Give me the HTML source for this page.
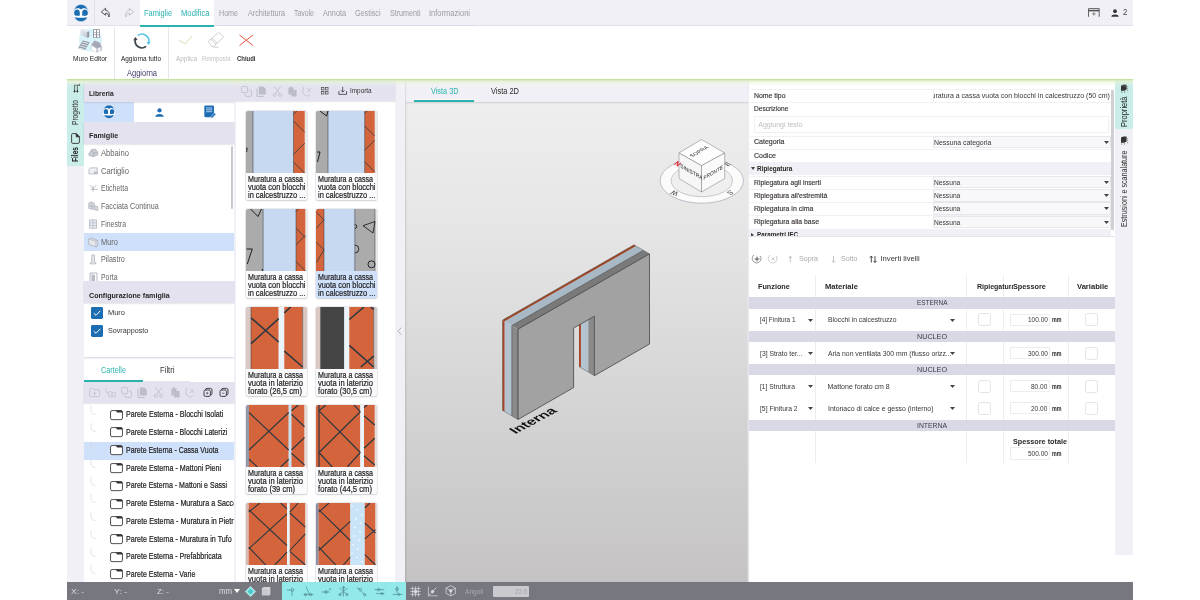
<!DOCTYPE html>
<html lang="it"><head><meta charset="utf-8"><title>Muro Editor</title>
<style>
html,body{margin:0;padding:0;background:#fff;}
body{width:1200px;height:600px;position:relative;overflow:hidden;font-family:"Liberation Sans",sans-serif;}
.r{position:absolute;box-sizing:border-box;}
.b{-webkit-text-stroke-width:0.2px;}
.t{position:absolute;z-index:3;white-space:nowrap;line-height:1;transform-origin:0 50%;}
svg{position:absolute;overflow:visible;z-index:3;}
#app{position:absolute;left:0;top:0;width:1200px;height:600px;will-change:transform;}
</style></head><body><div id="app">
<div class="r" style="left:67.0px;top:0.0px;width:1066.0px;height:26.0px;background:#f1f0f6;border-bottom:1px solid #e2e1ea;"></div>
<div class="r" style="left:140.0px;top:0.0px;width:74.0px;height:26.5px;background:#fff;"></div>
<div class="r" style="left:140.0px;top:24.5px;width:74.0px;height:2.0px;background:#2ab3ae;"></div>
<div class="r" style="left:94.0px;top:0.0px;width:0.6px;height:25.0px;background:#e2e1ea;"></div>
<div class="r" style="left:214.0px;top:25.0px;width:261.0px;height:1.0px;background:#dad9e8;"></div>
<svg style="left:71.8px;top:3.2px" width="18" height="20" viewBox="-9 -10 18 20">
<ellipse rx="7.6" ry="8.7" fill="#1d6db3" stroke="#fff" stroke-width="0.5"/>
<path d="M-7.7 -0.6 C-7.7 -5.4 -1 -5.8 0 -3.3 C1 -5.8 7.7 -5.4 7.7 -0.6 L7.7 3.8 C5 5.1 -5 5.1 -7.7 3.8 Z" fill="#fff"/>
<path d="M-6.9 0 C-6.9 -4.6 -1.2 -4.6 -1.2 -0.6 V2.2 Q-1.2 2.8 -1.8 2.8 H-5.2 Q-6.9 2.8 -6.9 0Z M6.9 0 C6.9 -4.6 1.2 -4.6 1.2 -0.6 V2.2 Q1.2 2.8 1.8 2.8 H5.2 Q6.9 2.8 6.9 0Z" fill="#1d6db3"/>
</svg>
<svg style="left:100px;top:7px" width="12" height="12" viewBox="0 0 12 12" fill="none" stroke="#444" stroke-width="0.9" stroke-linejoin="round"><path d="M5.6 1.2 L1.3 5 L5.6 8.2 V6.2 C7.6 6.2 8.6 7.6 8.9 10 C10.2 6.6 8.6 3.6 5.6 3.4 Z"/></svg>
<svg style="left:122.5px;top:7px" width="12" height="12" viewBox="0 0 12 12" fill="none" stroke="#bdbdc4" stroke-width="0.9" stroke-linejoin="round"><path d="M6.4 1.2 L10.7 5 L6.4 8.2 V6.2 C4.4 6.2 3.4 7.6 3.1 10 C1.8 6.6 3.4 3.6 6.4 3.4 Z"/></svg>
<span class="t" style="left:144.0px;top:8.7px;font-size:8.3px;color:#2ab3ae;transform:scaleX(0.893);">Famiglie</span>
<span class="t" style="left:181.0px;top:8.7px;font-size:8.3px;color:#2ab3ae;transform:scaleX(0.922);">Modifica</span>
<span class="t" style="left:219.0px;top:8.7px;font-size:8.3px;color:#9a9aa2;transform:scaleX(0.858);">Home</span>
<span class="t" style="left:247.5px;top:8.7px;font-size:8.3px;color:#9a9aa2;transform:scaleX(0.872);">Architettura</span>
<span class="t" style="left:293.7px;top:8.7px;font-size:8.3px;color:#9a9aa2;transform:scaleX(0.825);">Tavole</span>
<span class="t" style="left:322.5px;top:8.7px;font-size:8.3px;color:#9a9aa2;transform:scaleX(0.874);">Annota</span>
<span class="t" style="left:354.5px;top:8.7px;font-size:8.3px;color:#9a9aa2;transform:scaleX(0.864);">Gestisci</span>
<span class="t" style="left:389.5px;top:8.7px;font-size:8.3px;color:#9a9aa2;transform:scaleX(0.859);">Strumenti</span>
<span class="t" style="left:429.0px;top:8.7px;font-size:8.3px;color:#9a9aa2;transform:scaleX(0.907);">Informazioni</span>
<svg style="left:1088px;top:8px" width="12" height="9" viewBox="0 0 12 9" fill="none" stroke="#555" stroke-width="0.9"><path d="M0.5 8.8 V0.6 H11.2 V8.8"/><path d="M0.5 2.6 H11.2" stroke-width="1.6"/><path d="M5.9 4.2 V7.6 M4.3 5.9 H7.5" stroke-width="0.7"/></svg>
<svg style="left:1110.5px;top:8.5px" width="8" height="8" viewBox="0 0 8 8" fill="#333"><circle cx="4" cy="2.2" r="1.9"/><path d="M0.3 7.8 C0.3 4.6 7.7 4.6 7.7 7.8 Z"/></svg>
<span class="t" style="left:1123.0px;top:8.4px;font-size:8.3px;color:#444;transform:scaleX(0.931);">2</span>
<div class="r" style="left:67.0px;top:26.5px;width:1066.0px;height:53.5px;background:#fff;"></div>
<div class="r" style="left:114.2px;top:27.0px;width:0.6px;height:52.0px;background:#e6e6ec;"></div>
<div class="r" style="left:168.2px;top:27.0px;width:0.6px;height:52.0px;background:#e6e6ec;"></div>
<svg style="left:74px;top:26px" width="36" height="28" viewBox="0 0 36 28">
<defs><linearGradient id="wg" x1="0" y1="0" x2="1" y2="1"><stop offset="0" stop-color="#eef0f5"/><stop offset="1" stop-color="#bfc3cf"/></linearGradient></defs>
<circle cx="16.6" cy="14" r="11.6" fill="#d9f3fb"/>
<path d="M6.2 3 L13.2 6 V12 L6.2 8.6Z" fill="url(#wg)"/><path d="M6.2 3 L8.4 2.3 L15.2 5.3 L13.2 6Z" fill="#e9ebf1"/><path d="M13.2 6 L15.2 5.3 V11 L13.2 12Z" fill="#8f93a0"/>
<rect x="19" y="3.2" width="6.9" height="8.7" fill="#8d909c"/><path d="M19.9 4 h2.1 v2 h-2.1z M23 4 h2.1 v2 h-2.1z M19.9 6.6 h2.1 v2 h-2.1z M23 6.6 h2.1 v2 h-2.1z M19.9 9.2 h2.1 v2 h-2.1z M23 9.2 h2.1 v2 h-2.1z" fill="#fff"/>
<path d="M8.8 14.4 L15.6 16.2 L10.8 24.2 L4 22.2Z" fill="#9195a3"/><path d="M8.6 16 L14.2 17.5 M7.4 18 L13 19.5 M6.2 20 L11.8 21.5 M5 22 L10.6 23.5" stroke="#dfeaf2" stroke-width="1.1"/>
<path d="M17.2 19 L20.4 14.4 L25.6 16.6 L28 20.8 L22.4 22.8Z" fill="#a6aab8"/><path d="M17.6 19.4 L22.4 22.6 V26.8 L17.6 23.8Z" fill="#fff" stroke="#b9bcc8" stroke-width="0.3"/><path d="M22.4 22.6 L28 20.6 V24.6 L22.4 26.8Z" fill="#c3c6d1"/><path d="M24 22.4 L26.4 21.5 V24.6 L24 25.6Z" fill="#f4f5f8"/>
</svg>
<span class="t" style="left:73.0px;top:54.5px;font-size:7.6px;color:#222;transform:scaleX(0.866);">Muro Editor</span>
<svg style="left:132.5px;top:32px" width="18" height="18" viewBox="-9 -9 18 18" fill="none" stroke-width="1.7">
<path d="M-4.2 -5.4 A6.8 6.8 0 0 1 6.6 1.6" stroke="#5cc6ea"/><path d="M4.3 1.2 L6.8 4 L8.8 0.6 Z" fill="#5cc6ea" stroke="none"/>
<path d="M4.2 5.4 A6.8 6.8 0 0 1 -6.6 -1.6" stroke="#3c4650"/><path d="M-4.3 -1.2 L-6.8 -4 L-8.8 -0.6 Z" fill="#3c4650" stroke="none"/>
</svg>
<span class="t" style="left:121.0px;top:54.5px;font-size:7.6px;color:#222;transform:scaleX(0.845);">Aggiorna tutto</span>
<span class="t" style="left:127.0px;top:69.1px;font-size:8.3px;color:#3c3c6e;transform:scaleX(0.903);">Aggiorna</span>
<svg style="left:176px;top:32px" width="20" height="16" viewBox="0 0 20 16" fill="none"><path d="M3 8 L9 12 L16 4" stroke="#c9dfa2" stroke-width="0.9"/></svg>
<svg style="left:206px;top:30px" width="20" height="20" viewBox="0 0 20 20" fill="none" stroke="#b9b9be" stroke-width="0.7"><path d="M2.3 11.5 L12.6 2.2 L17.6 7 L7.6 16.6 H5.8 Z"/><path d="M4.8 9.3 L10 14.3 M6 8.2 L11.2 13.2"/><path d="M7.6 17.2 H12.4"/></svg>
<svg style="left:238px;top:33px" width="17" height="15" viewBox="0 0 17 15" fill="none" stroke="#e2573f" stroke-width="1"><path d="M1.5 2 L15 12.5 M15 2 L1.5 12.5"/></svg>
<span class="t" style="left:176.0px;top:54.5px;font-size:7.6px;color:#b9b9bd;transform:scaleX(0.842);">Applica</span>
<span class="t" style="left:202.0px;top:54.5px;font-size:7.6px;color:#c4c4c8;transform:scaleX(0.785);">Reimposta</span>
<span class="t" style="left:237.0px;top:54.5px;font-size:7.6px;color:#333;font-weight:700;transform:scaleX(0.783);">Chiudi</span>
<div class="r" style="left:67.0px;top:80.0px;width:17.0px;height:502.0px;background:#f1f0f6;"></div>
<div class="r" style="left:67.0px;top:83.0px;width:17.0px;height:83.0px;background:#c9ede8;"></div>
<svg style="left:72.5px;top:84.3px" width="7" height="9" viewBox="0 0 9 9" preserveAspectRatio="none" fill="none" stroke="#333" stroke-width="0.8"><path d="M1 1.2 H7.4 M2 1.2 V7.2 M5.6 1.2 V7.2"/><circle cx="2" cy="7.4" r="0.8" fill="#333"/><circle cx="5.6" cy="7.4" r="0.8" fill="#333"/><circle cx="8" cy="0.9" r="0.7" fill="#333"/></svg>
<span class="t" style="left:75.4px;top:125.0px;font-size:9px;color:#333;transform-origin:0 0;transform:rotate(-90deg) scaleX(0.735) translateY(-50%);">Progetto</span>
<svg style="left:71px;top:132.5px" width="9" height="11" viewBox="0 0 9 11" fill="none" stroke="#333" stroke-width="0.9" stroke-linejoin="round"><path d="M1.6 0.6 H5.2 L8.4 3.8 V9.2 Q8.4 10.4 7.2 10.4 H1.8 Q0.6 10.4 0.6 9.2 V1.6 Q0.6 0.6 1.6 0.6Z"/><path d="M5.2 0.6 V3.8 H8.4Z" fill="#333"/></svg>
<span class="t" style="left:75.4px;top:161.7px;font-size:9px;color:#222;transform-origin:0 0;transform:rotate(-90deg) scaleX(0.731) translateY(-50%);font-weight:700;">Files</span>
<div class="r" style="left:84.0px;top:80.0px;width:150.0px;height:502.0px;background:#fff;"></div>
<div class="r" style="left:234.0px;top:80.0px;width:1.5px;height:502.0px;background:#f1f0f6;"></div>
<div class="r" style="left:84.0px;top:80.0px;width:150.0px;height:21.5px;background:#e3e2ee;box-shadow:0 0.8px 1.6px rgba(40,40,60,.22);z-index:2;"></div>
<span class="t" style="left:89.0px;top:90.3px;font-size:7.6px;color:#2a2626;font-weight:700;transform:scaleX(0.886);">Libreria</span>
<div class="r" style="left:84.0px;top:101.5px;width:50.0px;height:20.5px;background:#cfe0fb;"></div>
<svg style="left:102.2px;top:104.1px" width="14" height="15.6" viewBox="-9 -10 18 20">
<ellipse rx="7.6" ry="8.7" fill="#1d6db3" stroke="#fff" stroke-width="0.5"/>
<path d="M-7.7 -0.6 C-7.7 -5.4 -1 -5.8 0 -3.3 C1 -5.8 7.7 -5.4 7.7 -0.6 L7.7 3.8 C5 5.1 -5 5.1 -7.7 3.8 Z" fill="#fff"/>
<path d="M-6.9 0 C-6.9 -4.6 -1.2 -4.6 -1.2 -0.6 V2.2 Q-1.2 2.8 -1.8 2.8 H-5.2 Q-6.9 2.8 -6.9 0Z M6.9 0 C6.9 -4.6 1.2 -4.6 1.2 -0.6 V2.2 Q1.2 2.8 1.8 2.8 H5.2 Q6.9 2.8 6.9 0Z" fill="#1d6db3"/>
</svg>
<svg style="left:154.5px;top:108px" width="9" height="9" viewBox="0 0 8 8" fill="#1d6db3"><circle cx="4" cy="2.2" r="1.9"/><path d="M0.3 7.8 C0.3 4.6 7.7 4.6 7.7 7.8 Z"/></svg>
<svg style="left:204.2px;top:105.3px" width="12.4" height="15" viewBox="0 0 12 14"><path d="M0.3 1.4 Q0.3 0.3 1.4 0.3 H8.6 Q9.7 0.3 9.7 1.4 V8 L6.2 11.6 H1.4 Q0.3 11.6 0.3 10.5Z" fill="#1d6db3"/><path d="M2 2.6 H8 M2 4.4 H8 M2 6.2 H8" stroke="#cfe0fb" stroke-width="0.8"/><path d="M6.4 12.6 L7 10.6 L10.4 7.4 L11.6 8.6 L8.3 12Z" fill="#1d6db3" stroke="#fff" stroke-width="0.4"/></svg>
<div class="r" style="left:84.0px;top:122.0px;width:150.0px;height:22.0px;background:#e3e2ee;box-shadow:0 0.8px 1.6px rgba(40,40,60,.22);z-index:2;"></div>
<span class="t" style="left:88.8px;top:131.8px;font-size:7.6px;color:#2a2626;font-weight:700;transform:scaleX(0.947);">Famiglie</span>
<div class="r" style="left:84.0px;top:233.0px;width:150.0px;height:18.0px;background:#cfe0fb;"></div>
<div class="r" style="left:84px;top:144px;width:150px;height:136.5px;overflow:hidden"></div>
<svg style="left:88px;top:147.8px" width="10.2" height="10.2" viewBox="0 0 11 11"><path d="M1 6 L3.5 2 L8 1 L10.5 4.5 V7.5 L6 9.5 L1 8Z" fill="#c9ccd3" stroke="#a2a6b3" stroke-width="0.6"/><path d="M3.5 2 L6 5.5 L10.5 4.5 M6 5.5 V9.5" fill="none" stroke="#a2a6b3" stroke-width="0.6"/></svg>
<span class="t" style="left:101.2px;top:148.8px;font-size:8.3px;color:#666;transform:scaleX(0.919);">Abbaino</span>
<svg style="left:88px;top:165.6px" width="10.2" height="10.2" viewBox="0 0 11 11"><path d="M1 3.5 L3 2 H10 V8.6 H1Z" fill="#eef0f4" stroke="#a2a6b3" stroke-width="0.7"/><path d="M6.5 6 H10 V8.6 H6.5Z" fill="#b8bcc6"/></svg>
<span class="t" style="left:101.2px;top:166.6px;font-size:8.3px;color:#666;transform:scaleX(0.920);">Cartiglio</span>
<svg style="left:88px;top:183.3px" width="10.2" height="10.2" viewBox="0 0 11 11"><path d="M2 2 L5.5 6.5 L9 2 M5.5 3 V9.5 M3 7 H10.5" fill="none" stroke="#a2a6b3" stroke-width="0.7"/></svg>
<span class="t" style="left:101.2px;top:184.3px;font-size:8.3px;color:#666;transform:scaleX(0.836);">Etichetta</span>
<svg style="left:88px;top:201.1px" width="10.2" height="10.2" viewBox="0 0 11 11"><path d="M0.8 2 L4 1 L7 2.6 V5 L10.6 6 V10.4 L7 9.4 L0.8 8Z" fill="#d5d8df" stroke="#a2a6b3" stroke-width="0.6"/><path d="M4 1 V8.7 M7 5 V9.4 M0.8 5 L7 6.4" fill="none" stroke="#a2a6b3" stroke-width="0.5"/></svg>
<span class="t" style="left:101.2px;top:202.1px;font-size:8.3px;color:#666;transform:scaleX(0.863);">Facciata Continua</span>
<svg style="left:88px;top:218.8px" width="10.2" height="10.2" viewBox="0 0 11 11"><rect x="1.8" y="1" width="7.4" height="9" fill="#e3ecf2" stroke="#aeb2be" stroke-width="0.8"/><path d="M5.5 1 V10 M1.8 4 H9.2 M1.8 7 H9.2" stroke="#aeb2be" stroke-width="0.6"/></svg>
<span class="t" style="left:101.2px;top:219.8px;font-size:8.3px;color:#666;transform:scaleX(0.834);">Finestra</span>
<svg style="left:88px;top:236.6px" width="10.2" height="10.2" viewBox="0 0 11 11"><path d="M0.8 2.2 L2.6 1 L10.4 3.6 V10 L8.6 10.6 L0.8 8Z" fill="#e4e6ea" stroke="#a2a6b3" stroke-width="0.7"/><path d="M8.6 4.4 V10.6 M0.8 2.2 L8.6 4.4 L10.4 3.6" fill="none" stroke="#a2a6b3" stroke-width="0.6"/></svg>
<span class="t" style="left:101.2px;top:237.6px;font-size:8.3px;color:#666;transform:scaleX(0.899);">Muro</span>
<svg style="left:88px;top:254.3px" width="10.2" height="10.2" viewBox="0 0 11 11"><path d="M4 1 H7 V8.6 L8.6 9.4 V10.6 H2.4 V9.4 L4 8.6Z" fill="#e4e6ea" stroke="#a2a6b3" stroke-width="0.7"/></svg>
<span class="t" style="left:101.2px;top:255.3px;font-size:8.3px;color:#666;transform:scaleX(0.858);">Pilastro</span>
<div class="r" style="left:84px;top:270px;width:150px;height:10.5px;overflow:hidden">
<svg style="left:3.5px;top:1.8px" width="11" height="11" viewBox="0 0 11 11"><path d="M2 10.6 V1 H9 V10.6" fill="none" stroke="#a2a6b3" stroke-width="0.8"/><path d="M3.4 2.2 L7 3 V10.6 H3.4Z" fill="#b8bcc6"/></svg>
<span class="t" style="left:17.25px;top:3.1px;font-size:8.3px;color:#666;transform:scaleX(0.832)">Porta</span></div>
<div class="r" style="left:231.3px;top:146.0px;width:1.7px;height:63.0px;background:#c9c9cf;border-radius:1px;"></div>
<div class="r" style="left:84.0px;top:280.5px;width:150.0px;height:22.5px;background:#e3e2ee;box-shadow:0 0.8px 1.6px rgba(40,40,60,.22);z-index:2;"></div>
<span class="t" style="left:88.8px;top:291.8px;font-size:7.6px;color:#2a2626;font-weight:700;transform:scaleX(0.937);">Configurazione famiglia</span>
<svg style="left:90.5px;top:306.5px" width="12" height="12" viewBox="0 0 12 12"><rect width="12" height="12" rx="1.4" fill="#1d6db3"/><path d="M2.8 6.2 L5 8.3 L9.3 3.8" fill="none" stroke="#fff" stroke-width="1"/></svg>
<span class="t" style="left:108.0px;top:308.5px;font-size:8px;color:#333;transform:scaleX(0.933);">Muro</span>
<svg style="left:90.5px;top:324.5px" width="12" height="12" viewBox="0 0 12 12"><rect width="12" height="12" rx="1.4" fill="#1d6db3"/><path d="M2.8 6.2 L5 8.3 L9.3 3.8" fill="none" stroke="#fff" stroke-width="1"/></svg>
<span class="t" style="left:108.0px;top:326.5px;font-size:8px;color:#333;transform:scaleX(0.896);">Sovrapposto</span>
<div class="r" style="left:84.0px;top:356.5px;width:150.0px;height:2.5px;background:#f1f0f6;border-top:1px solid #e2e1ea;"></div>
<span class="t" style="left:101.2px;top:366.1px;font-size:8.3px;color:#2ab3ae;transform:scaleX(0.874);">Cartelle</span>
<span class="t" style="left:159.5px;top:366.1px;font-size:8.3px;color:#333;transform:scaleX(0.925);">Filtri</span>
<div class="r" style="left:84.0px;top:380.0px;width:58.7px;height:1.8px;background:#2ab3ae;"></div>
<div class="r" style="left:142.7px;top:381.0px;width:47.3px;height:0.8px;background:#e6e6ee;"></div>
<div class="r" style="left:84.0px;top:382.3px;width:150.0px;height:21.0px;background:#e3e2ee;box-shadow:0 0.8px 1.6px rgba(40,40,60,.22);z-index:2;"></div>
<svg style="left:88.5px;top:387px" width="11" height="11" viewBox="0 0 11 11"><path d="M0.6 2.6 Q0.6 1.6 1.6 1.6 H4 L5 2.8 H9.6 Q10.6 2.8 10.6 3.8 V8.6 Q10.6 9.6 9.6 9.6 H1.6 Q0.6 9.6 0.6 8.6Z M5.6 4.8 V8 M4 6.4 H7.2" fill="none" stroke="#bdbdc9" stroke-width="0.7"/></svg>
<svg style="left:105.2px;top:387px" width="11" height="11" viewBox="0 0 11 11"><path d="M1 1 V4 Q1 6.5 3.5 6.5 M3.8 5.4 Q3.8 4.6 4.6 4.6 H6 L6.6 5.4 H9.6 Q10.4 5.4 10.4 6.2 V9 Q10.4 9.8 9.6 9.8 H4.6 Q3.8 9.8 3.8 9Z M7.1 6.4 V8.8 M5.9 7.6 H8.3" fill="none" stroke="#bdbdc9" stroke-width="0.7"/></svg>
<svg style="left:121.2px;top:387px" width="11" height="11" viewBox="0 0 11 11"><rect x="0.6" y="0.6" width="6" height="6" rx="0.8" fill="none" stroke="#bdbdc9" stroke-width="0.8"/><path d="M8 4.2 H9.6 Q10.4 4.2 10.4 5 V9.6 Q10.4 10.4 9.6 10.4 H5 Q4.2 10.4 4.2 9.6 V8" fill="none" stroke="#bdbdc9" stroke-width="0.8"/></svg>
<svg style="left:137.0px;top:387px" width="11" height="11" viewBox="0 0 11 11"><path d="M2.8 0.6 H7.4 L9.8 3 V8.6 H2.8Z" fill="#bdbdc9"/><path d="M1 2.4 V10.4 H7.8" fill="none" stroke="#bdbdc9" stroke-width="1"/></svg>
<svg style="left:153.2px;top:387px" width="11" height="11" viewBox="0 0 11 11"><path d="M2.4 0.6 L7.4 7.4 M8.6 0.6 L3.6 7.4" stroke="#bdbdc9" stroke-width="0.8"/><circle cx="2.8" cy="8.8" r="1.5" fill="none" stroke="#bdbdc9" stroke-width="0.8"/><circle cx="8.2" cy="8.8" r="1.5" fill="none" stroke="#bdbdc9" stroke-width="0.8"/></svg>
<svg style="left:169.5px;top:387px" width="11" height="11" viewBox="0 0 11 11"><path d="M1.4 1.6 H6.6 V4 H9.6 V10.4 H4.2 V8.6 H1.4Z M3 0.6 H5 V2 H3Z" fill="#bdbdc9"/></svg>
<svg style="left:184.5px;top:387px" width="11" height="11" viewBox="0 0 11 11"><path d="M1.4 0.8 V3 A4.6 4.6 0 0 0 8.4 8.8" fill="none" stroke="#bdbdc9" stroke-width="0.7"/><path d="M5.2 2 L9 5.8 M9 2 L5.2 5.8" stroke="#bdbdc9" stroke-width="0.7"/></svg>
<svg style="left:201.5px;top:387px" width="11" height="11" viewBox="0 0 11 11"><rect x="2" y="3" width="6.4" height="6.4" rx="1.4" fill="none" stroke="#333" stroke-width="0.9"/><path d="M3.4 3 Q3.4 1.4 5 1.4 H8.4 Q10 1.4 10 3 V6.4 Q10 8 8.4 8" fill="none" stroke="#333" stroke-width="0.9"/><path d="M5.2 5 V7.4 M4 6.2 H6.4" stroke="#333" stroke-width="0.6"/></svg>
<svg style="left:217.5px;top:387px" width="11" height="11" viewBox="0 0 11 11"><rect x="2" y="3" width="6.4" height="6.4" rx="1.4" fill="none" stroke="#333" stroke-width="0.9"/><path d="M3.4 3 Q3.4 1.4 5 1.4 H8.4 Q10 1.4 10 3 V6.4 Q10 8 8.4 8" fill="none" stroke="#333" stroke-width="0.9"/><path d="M4 6.2 H6.4" stroke="#333" stroke-width="0.6"/></svg>
<div class="r" style="left:84.0px;top:442.0px;width:150.0px;height:17.7px;background:#cfe0fb;"></div>
<div class="r" style="left:84px;top:403.5px;width:150px;height:178.5px;overflow:hidden">
<svg style="left:6px;top:2.0px" width="8" height="10" viewBox="0 0 8 10"><path d="M1 0 V4 Q1 8.4 5.6 8.6" fill="none" stroke="#d8d8de" stroke-width="0.7"/></svg>
<svg style="left:25.8px;top:6.2px" width="13.4" height="10.4" viewBox="0 0 14 11"><rect x="0.5" y="0.6" width="12.6" height="9.6" rx="1.6" fill="#fff" stroke="#333" stroke-width="0.9"/><path d="M6 0.6 H11.6 Q13.1 0.6 13.1 2.2 V2.6 H7.4Z" fill="#333"/></svg>
<span class="t b" style="left:41.6px;top:6.8px;font-size:8.3px;color:#222;transform:scaleX(0.858)">Parete Esterna - Blocchi Isolati</span>
<svg style="left:6px;top:19.8px" width="8" height="10" viewBox="0 0 8 10"><path d="M1 0 V4 Q1 8.4 5.6 8.6" fill="none" stroke="#d8d8de" stroke-width="0.7"/></svg>
<svg style="left:25.8px;top:23.9px" width="13.4" height="10.4" viewBox="0 0 14 11"><rect x="0.5" y="0.6" width="12.6" height="9.6" rx="1.6" fill="#fff" stroke="#333" stroke-width="0.9"/><path d="M6 0.6 H11.6 Q13.1 0.6 13.1 2.2 V2.6 H7.4Z" fill="#333"/></svg>
<span class="t b" style="left:41.6px;top:24.6px;font-size:8.3px;color:#222;transform:scaleX(0.855)">Parete Esterna - Blocchi Laterizi</span>
<svg style="left:6px;top:37.5px" width="8" height="10" viewBox="0 0 8 10"><path d="M1 0 V4 Q1 8.4 5.6 8.6" fill="none" stroke="#d8d8de" stroke-width="0.7"/></svg>
<svg style="left:25.8px;top:41.7px" width="13.4" height="10.4" viewBox="0 0 14 11"><rect x="0.5" y="0.6" width="12.6" height="9.6" rx="1.6" fill="#fff" stroke="#333" stroke-width="0.9"/><path d="M6 0.6 H11.6 Q13.1 0.6 13.1 2.2 V2.6 H7.4Z" fill="#333"/></svg>
<span class="t b" style="left:41.6px;top:42.4px;font-size:8.3px;color:#222;transform:scaleX(0.840)">Parete Esterna - Cassa Vuota</span>
<svg style="left:6px;top:55.2px" width="8" height="10" viewBox="0 0 8 10"><path d="M1 0 V4 Q1 8.4 5.6 8.6" fill="none" stroke="#d8d8de" stroke-width="0.7"/></svg>
<svg style="left:25.8px;top:59.5px" width="13.4" height="10.4" viewBox="0 0 14 11"><rect x="0.5" y="0.6" width="12.6" height="9.6" rx="1.6" fill="#fff" stroke="#333" stroke-width="0.9"/><path d="M6 0.6 H11.6 Q13.1 0.6 13.1 2.2 V2.6 H7.4Z" fill="#333"/></svg>
<span class="t b" style="left:41.6px;top:60.1px;font-size:8.3px;color:#222;transform:scaleX(0.859)">Parete Esterna - Mattoni Pieni</span>
<svg style="left:6px;top:73.0px" width="8" height="10" viewBox="0 0 8 10"><path d="M1 0 V4 Q1 8.4 5.6 8.6" fill="none" stroke="#d8d8de" stroke-width="0.7"/></svg>
<svg style="left:25.8px;top:77.2px" width="13.4" height="10.4" viewBox="0 0 14 11"><rect x="0.5" y="0.6" width="12.6" height="9.6" rx="1.6" fill="#fff" stroke="#333" stroke-width="0.9"/><path d="M6 0.6 H11.6 Q13.1 0.6 13.1 2.2 V2.6 H7.4Z" fill="#333"/></svg>
<span class="t b" style="left:41.6px;top:77.8px;font-size:8.3px;color:#222;transform:scaleX(0.847)">Parete Esterna - Mattoni e Sassi</span>
<svg style="left:6px;top:90.8px" width="8" height="10" viewBox="0 0 8 10"><path d="M1 0 V4 Q1 8.4 5.6 8.6" fill="none" stroke="#d8d8de" stroke-width="0.7"/></svg>
<svg style="left:25.8px;top:95.0px" width="13.4" height="10.4" viewBox="0 0 14 11"><rect x="0.5" y="0.6" width="12.6" height="9.6" rx="1.6" fill="#fff" stroke="#333" stroke-width="0.9"/><path d="M6 0.6 H11.6 Q13.1 0.6 13.1 2.2 V2.6 H7.4Z" fill="#333"/></svg>
<span class="t b" style="left:41.6px;top:95.6px;font-size:8.3px;color:#222;transform:scaleX(0.867)">Parete Esterna - Muratura a Sacco</span>
<svg style="left:6px;top:108.5px" width="8" height="10" viewBox="0 0 8 10"><path d="M1 0 V4 Q1 8.4 5.6 8.6" fill="none" stroke="#d8d8de" stroke-width="0.7"/></svg>
<svg style="left:25.8px;top:112.7px" width="13.4" height="10.4" viewBox="0 0 14 11"><rect x="0.5" y="0.6" width="12.6" height="9.6" rx="1.6" fill="#fff" stroke="#333" stroke-width="0.9"/><path d="M6 0.6 H11.6 Q13.1 0.6 13.1 2.2 V2.6 H7.4Z" fill="#333"/></svg>
<span class="t b" style="left:41.6px;top:113.3px;font-size:8.3px;color:#222;transform:scaleX(0.868)">Parete Esterna - Muratura in Pietra</span>
<svg style="left:6px;top:126.2px" width="8" height="10" viewBox="0 0 8 10"><path d="M1 0 V4 Q1 8.4 5.6 8.6" fill="none" stroke="#d8d8de" stroke-width="0.7"/></svg>
<svg style="left:25.8px;top:130.4px" width="13.4" height="10.4" viewBox="0 0 14 11"><rect x="0.5" y="0.6" width="12.6" height="9.6" rx="1.6" fill="#fff" stroke="#333" stroke-width="0.9"/><path d="M6 0.6 H11.6 Q13.1 0.6 13.1 2.2 V2.6 H7.4Z" fill="#333"/></svg>
<span class="t b" style="left:41.6px;top:131.1px;font-size:8.3px;color:#222;transform:scaleX(0.858)">Parete Esterna - Muratura in Tufo</span>
<svg style="left:6px;top:144.0px" width="8" height="10" viewBox="0 0 8 10"><path d="M1 0 V4 Q1 8.4 5.6 8.6" fill="none" stroke="#d8d8de" stroke-width="0.7"/></svg>
<svg style="left:25.8px;top:148.2px" width="13.4" height="10.4" viewBox="0 0 14 11"><rect x="0.5" y="0.6" width="12.6" height="9.6" rx="1.6" fill="#fff" stroke="#333" stroke-width="0.9"/><path d="M6 0.6 H11.6 Q13.1 0.6 13.1 2.2 V2.6 H7.4Z" fill="#333"/></svg>
<span class="t b" style="left:41.6px;top:148.8px;font-size:8.3px;color:#222;transform:scaleX(0.853)">Parete Esterna - Prefabbricata</span>
<svg style="left:6px;top:161.8px" width="8" height="10" viewBox="0 0 8 10"><path d="M1 0 V4 Q1 8.4 5.6 8.6" fill="none" stroke="#d8d8de" stroke-width="0.7"/></svg>
<svg style="left:25.8px;top:165.9px" width="13.4" height="10.4" viewBox="0 0 14 11"><rect x="0.5" y="0.6" width="12.6" height="9.6" rx="1.6" fill="#fff" stroke="#333" stroke-width="0.9"/><path d="M6 0.6 H11.6 Q13.1 0.6 13.1 2.2 V2.6 H7.4Z" fill="#333"/></svg>
<span class="t b" style="left:41.6px;top:166.6px;font-size:8.3px;color:#222;transform:scaleX(0.851)">Parete Esterna - Varie</span>
</div>
<div class="r" style="left:235.5px;top:80.0px;width:159.5px;height:502.0px;background:#fff;"></div>
<div class="r" style="left:235.5px;top:80.0px;width:159.5px;height:21.4px;background:#e3e2ee;box-shadow:0 0.8px 1.6px rgba(40,40,60,.22);z-index:2;"></div>
<svg style="left:240.7px;top:85.5px" width="11" height="11" viewBox="0 0 11 11"><rect x="0.6" y="0.6" width="6" height="6" rx="0.8" fill="none" stroke="#bdbdc9" stroke-width="0.8"/><path d="M8 4.2 H9.6 Q10.4 4.2 10.4 5 V9.6 Q10.4 10.4 9.6 10.4 H5 Q4.2 10.4 4.2 9.6 V8" fill="none" stroke="#bdbdc9" stroke-width="0.8"/></svg>
<svg style="left:255.7px;top:85.5px" width="11" height="11" viewBox="0 0 11 11"><path d="M2.8 0.6 H7.4 L9.8 3 V8.6 H2.8Z" fill="#bdbdc9"/><path d="M1 2.4 V10.4 H7.8" fill="none" stroke="#bdbdc9" stroke-width="1"/></svg>
<svg style="left:271.5px;top:85.5px" width="11" height="11" viewBox="0 0 11 11"><path d="M2.4 0.6 L7.4 7.4 M8.6 0.6 L3.6 7.4" stroke="#bdbdc9" stroke-width="0.8"/><circle cx="2.8" cy="8.8" r="1.5" fill="none" stroke="#bdbdc9" stroke-width="0.8"/><circle cx="8.2" cy="8.8" r="1.5" fill="none" stroke="#bdbdc9" stroke-width="0.8"/></svg>
<svg style="left:287.0px;top:85.5px" width="11" height="11" viewBox="0 0 11 11"><path d="M1.4 1.6 H6.6 V4 H9.6 V10.4 H4.2 V8.6 H1.4Z M3 0.6 H5 V2 H3Z" fill="#bdbdc9"/></svg>
<svg style="left:302.0px;top:85.5px" width="11" height="11" viewBox="0 0 11 11"><path d="M1.4 0.8 V3 A4.6 4.6 0 0 0 8.4 8.8" fill="none" stroke="#bdbdc9" stroke-width="0.7"/><path d="M5.2 2 L9 5.8 M9 2 L5.2 5.8" stroke="#bdbdc9" stroke-width="0.7"/></svg>
<svg style="left:319.6px;top:85.9px" width="9.4" height="9.4" viewBox="0 0 11 11"><g fill="none" stroke="#444" stroke-width="0.8"><rect x="1.6" y="1.6" width="3" height="3"/><rect x="6.4" y="1.6" width="3" height="3"/><rect x="1.6" y="6.4" width="3" height="3"/><rect x="6.4" y="6.4" width="3" height="3"/></g></svg>
<svg style="left:337.6px;top:85.9px" width="9.4" height="9.4" viewBox="0 0 11 11"><path d="M1 6 V9.8 H10 V6 M5.5 1 V7 M3.4 5 L5.5 7.2 L7.6 5" fill="none" stroke="#333" stroke-width="0.9"/></svg>
<span class="t" style="left:350.0px;top:87.4px;font-size:7.6px;color:#333;transform:scaleX(0.842);">Importa</span>
<div class="r" style="left:245.5px;top:111px;width:61px;height:89px;border-radius:2px;overflow:hidden;background:#fafafd;box-shadow:0 0 0 0.6px #dddde6, 0 0.6px 1.4px rgba(0,0,0,.22);">
<svg style="left:0;top:0;overflow:hidden" width="61" height="62" viewBox="0 0 61 62"><rect width="61" height="62" fill="#ebe8e8"/><rect x="0" y="0" width="7" height="62" fill="#ababab"/><rect x="7" y="0" width="40.5" height="62" fill="#c6d9f1"/><rect x="47.5" y="0" width="11.2" height="62" fill="#d4643b"/><path d="M47.5 10 L58.7 21.2 M47.5 51 L58.7 62.2 M47.5 3.3 L58.7 -7.9 M47.5 43.3 L58.7 32.1" stroke="#2f3840" stroke-width="0.8" fill="none"/><path d="M7 0 V62 M47.5 0 V62" stroke="#2f3840" stroke-width="0.5"/><path d="M0 37 L1.2 37 L0.6 41" stroke="#111" stroke-width="0.8" fill="none"/></svg>
<span class="t b" style="left:2px;top:63.6px;font-size:8.3px;color:#222;transform:scaleX(0.858)">Muratura a cassa</span>
<span class="t b" style="left:2px;top:71.9px;font-size:8.3px;color:#222;transform:scaleX(0.897)">vuota con blocchi</span>
<span class="t b" style="left:2px;top:80.2px;font-size:8.3px;color:#222;transform:scaleX(0.897)">in calcestruzzo ...</span>
</div>
<div class="r" style="left:315.5px;top:111px;width:61px;height:89px;border-radius:2px;overflow:hidden;background:#fafafd;box-shadow:0 0 0 0.6px #dddde6, 0 0.6px 1.4px rgba(0,0,0,.22);">
<svg style="left:0;top:0;overflow:hidden" width="61" height="62" viewBox="0 0 61 62"><rect width="61" height="62" fill="#ebe8e8"/><rect x="0" y="0" width="12" height="62" fill="#ababab"/><rect x="12" y="0" width="36.7" height="62" fill="#c6d9f1"/><rect x="48.7" y="0" width="10.0" height="62" fill="#d4643b"/><path d="M48.7 15 L58.7 25.0 M48.7 50.8 L58.7 60.8 M48.7 2.5 L58.7 -7.5 M48.7 39.2 L58.7 29.2" stroke="#2f3840" stroke-width="0.8" fill="none"/><path d="M12 0 V62 M48.7 0 V62" stroke="#2f3840" stroke-width="0.5"/><path d="M4 0 L10.5 5 L12 0 M1 41 L4 41 L1.5 51" stroke="#111" stroke-width="0.9" fill="none"/></svg>
<span class="t b" style="left:2px;top:63.6px;font-size:8.3px;color:#222;transform:scaleX(0.858)">Muratura a cassa</span>
<span class="t b" style="left:2px;top:71.9px;font-size:8.3px;color:#222;transform:scaleX(0.897)">vuota con blocchi</span>
<span class="t b" style="left:2px;top:80.2px;font-size:8.3px;color:#222;transform:scaleX(0.897)">in calcestruzzo ...</span>
</div>
<div class="r" style="left:245.5px;top:209px;width:61px;height:89px;border-radius:2px;overflow:hidden;background:#fafafd;box-shadow:0 0 0 0.6px #dddde6, 0 0.6px 1.4px rgba(0,0,0,.22);">
<svg style="left:0;top:0;overflow:hidden" width="61" height="62" viewBox="0 0 61 62"><rect width="61" height="62" fill="#ebe8e8"/><rect x="0" y="0" width="17.2" height="62" fill="#ababab"/><rect x="17.2" y="0" width="32.8" height="62" fill="#c6d9f1"/><rect x="50" y="0" width="9.3" height="62" fill="#d4643b"/><path d="M50 19.2 L59.3 28.5 M50 52.5 L59.3 61.8 M50 2.5 L59.3 -6.8 M50 35.8 L59.3 26.5" stroke="#2f3840" stroke-width="0.8" fill="none"/><path d="M17.2 0 V62 M50 0 V62" stroke="#2f3840" stroke-width="0.5"/><path d="M4.5 0 L12 7.5 L15.5 0 M0.5 40 L6.3 40 L1.3 55 M16.3 60 V62" stroke="#111" stroke-width="0.9" fill="none"/></svg>
<span class="t b" style="left:2px;top:63.6px;font-size:8.3px;color:#222;transform:scaleX(0.858)">Muratura a cassa</span>
<span class="t b" style="left:2px;top:71.9px;font-size:8.3px;color:#222;transform:scaleX(0.897)">vuota con blocchi</span>
<span class="t b" style="left:2px;top:80.2px;font-size:8.3px;color:#222;transform:scaleX(0.897)">in calcestruzzo ...</span>
</div>
<div class="r" style="left:315.5px;top:209px;width:61px;height:89px;border-radius:2px;overflow:hidden;background:#cfe0fb;box-shadow:0 0 0 0.6px #dddde6, 0 0.6px 1.4px rgba(0,0,0,.22);">
<svg style="left:0;top:0;overflow:hidden" width="61" height="62" viewBox="0 0 61 62"><rect width="61" height="62" fill="#ebe8e8"/><rect x="0" y="0" width="8" height="62" fill="#d4643b"/><rect x="8" y="0" width="30.8" height="62" fill="#c6d9f1"/><rect x="38.8" y="0" width="20.2" height="62" fill="#ababab"/><path d="M0.5 3.3 L8 10.8 M8 10.8 L0.5 19.2 M0.5 33.3 L8 40.8 M8 40.8 L0.5 53.3" stroke="#2f3840" stroke-width="0.8" fill="none"/><path d="M8 0 V62 M38.8 0 V62 M59 0 V62" stroke="#2f3840" stroke-width="0.5"/><path d="M47 16.7 L59 12.5 L57 24Z M38.8 15.5 A1.8 1.8 0 0 1 38.8 19.5 M38.8 36 A4 4 0 0 1 38.8 44" stroke="#111" stroke-width="0.8" fill="none"/><circle cx="55.5" cy="55.3" r="3.5" stroke="#111" stroke-width="0.9" fill="none"/></svg>
<span class="t b" style="left:2px;top:63.6px;font-size:8.3px;color:#222;transform:scaleX(0.858)">Muratura a cassa</span>
<span class="t b" style="left:2px;top:71.9px;font-size:8.3px;color:#222;transform:scaleX(0.897)">vuota con blocchi</span>
<span class="t b" style="left:2px;top:80.2px;font-size:8.3px;color:#222;transform:scaleX(0.897)">in calcestruzzo ...</span>
</div>
<div class="r" style="left:245.5px;top:307px;width:61px;height:89px;border-radius:2px;overflow:hidden;background:#fafafd;box-shadow:0 0 0 0.6px #dddde6, 0 0.6px 1.4px rgba(0,0,0,.22);">
<svg style="left:0;top:0;overflow:hidden" width="61" height="62" viewBox="0 0 61 62"><rect width="61" height="62" fill="#ebe8e8"/><rect x="0" y="0" width="5" height="62" fill="#dcc8c2"/><rect x="5" y="0" width="27.7" height="62" fill="#d4643b"/><rect x="32.7" y="0" width="5.6" height="62" fill="#eaf4fb"/><rect x="38.3" y="0" width="18.4" height="62" fill="#d4643b"/><rect x="56.7" y="0" width="4.3" height="62" fill="#dcc8c2"/><path d="M5 10.8 L32.7 35 M5 36.7 L32.7 11.7 M38.3 5.8 L44.7 0 M38.3 44.2 L56.7 60" stroke="#2f3840" stroke-width="1.6" fill="none"/><path d="M5 0 V62 M56.7 0 V62" stroke="#2f3840" stroke-width="0.5"/></svg>
<span class="t b" style="left:2px;top:63.6px;font-size:8.3px;color:#222;transform:scaleX(0.858)">Muratura a cassa</span>
<span class="t b" style="left:2px;top:71.9px;font-size:8.3px;color:#222;transform:scaleX(0.917)">vuota in laterizio</span>
<span class="t b" style="left:2px;top:80.2px;font-size:8.3px;color:#222;transform:scaleX(0.922)">forato (26,5 cm)</span>
</div>
<div class="r" style="left:315.5px;top:307px;width:61px;height:89px;border-radius:2px;overflow:hidden;background:#fafafd;box-shadow:0 0 0 0.6px #dddde6, 0 0.6px 1.4px rgba(0,0,0,.22);">
<svg style="left:0;top:0;overflow:hidden" width="61" height="62" viewBox="0 0 61 62"><rect width="61" height="62" fill="#ebe8e8"/><rect x="0" y="0" width="4.3" height="62" fill="#dcc8c2"/><rect x="4.3" y="0" width="24.0" height="62" fill="#454545"/><rect x="28.3" y="0" width="5.0" height="62" fill="#eaf4fb"/><rect x="33.3" y="0" width="24.4" height="62" fill="#d4643b"/><rect x="57.7" y="0" width="3.3" height="62" fill="#cfc8c6"/><path d="M33.3 12.5 L48 0 M33.3 38.3 L57.7 60 M57.7 49.2 L44.7 60 M54.7 0 L57.7 2.5" stroke="#2f3840" stroke-width="1.6" fill="none"/><path d="M57.7 0 V62" stroke="#2f3840" stroke-width="0.5"/></svg>
<span class="t b" style="left:2px;top:63.6px;font-size:8.3px;color:#222;transform:scaleX(0.858)">Muratura a cassa</span>
<span class="t b" style="left:2px;top:71.9px;font-size:8.3px;color:#222;transform:scaleX(0.917)">vuota in laterizio</span>
<span class="t b" style="left:2px;top:80.2px;font-size:8.3px;color:#222;transform:scaleX(0.922)">forato (30,5 cm)</span>
</div>
<div class="r" style="left:245.5px;top:405px;width:61px;height:89px;border-radius:2px;overflow:hidden;background:#fafafd;box-shadow:0 0 0 0.6px #dddde6, 0 0.6px 1.4px rgba(0,0,0,.22);">
<svg style="left:0;top:0;overflow:hidden" width="61" height="62" viewBox="0 0 61 62"><rect width="61" height="62" fill="#ebe8e8"/><rect x="0" y="0" width="3" height="62" fill="#9298a8"/><rect x="3" y="0" width="39.7" height="62" fill="#d4643b"/><rect x="42.7" y="0" width="2.8" height="62" fill="#c4e2f6"/><rect x="45.5" y="0" width="13.0" height="62" fill="#d4643b"/><rect x="58.5" y="0" width="2.5" height="62" fill="#e6dcd8"/><path d="M3 7.5 L42.7 45 M3 45 L42.7 7.5 M3 54.2 L11.3 62 M42.7 54.2 L34.7 62 M45.5 5.8 L52.2 0 M45.5 9.2 L58.5 21.7 M58.5 32.5 L45.5 45 M45.5 48.3 L58.5 60" stroke="#2f3840" stroke-width="1.2" fill="none"/></svg>
<span class="t b" style="left:2px;top:63.6px;font-size:8.3px;color:#222;transform:scaleX(0.858)">Muratura a cassa</span>
<span class="t b" style="left:2px;top:71.9px;font-size:8.3px;color:#222;transform:scaleX(0.917)">vuota in laterizio</span>
<span class="t b" style="left:2px;top:80.2px;font-size:8.3px;color:#222;transform:scaleX(0.910)">forato (39 cm)</span>
</div>
<div class="r" style="left:315.5px;top:405px;width:61px;height:89px;border-radius:2px;overflow:hidden;background:#fafafd;box-shadow:0 0 0 0.6px #dddde6, 0 0.6px 1.4px rgba(0,0,0,.22);">
<svg style="left:0;top:0;overflow:hidden" width="61" height="62" viewBox="0 0 61 62"><rect width="61" height="62" fill="#ebe8e8"/><rect x="0" y="0" width="44.3" height="62" fill="#d4643b"/><rect x="44.3" y="0" width="3.7" height="62" fill="#eaf4fb"/><rect x="48" y="0" width="10.8" height="62" fill="#d4643b"/><rect x="58.8" y="0" width="2.2" height="62" fill="#e6dcd8"/><path d="M3 5.8 L44.3 47.5 M3 47.5 L44.3 6.7 M3 5.8 L9.7 0 M38 0 L44.3 6.7 M3 47.5 L16.3 62 M44.3 47.5 L31.3 62 M48 10.8 L58.8 20 M58.8 33.3 L48 43.3 M48 50.8 L58.8 60 M48 2.5 L51.3 0 M3 0 L3 62" stroke="#2f3840" stroke-width="1.2" fill="none"/></svg>
<span class="t b" style="left:2px;top:63.6px;font-size:8.3px;color:#222;transform:scaleX(0.858)">Muratura a cassa</span>
<span class="t b" style="left:2px;top:71.9px;font-size:8.3px;color:#222;transform:scaleX(0.917)">vuota in laterizio</span>
<span class="t b" style="left:2px;top:80.2px;font-size:8.3px;color:#222;transform:scaleX(0.922)">forato (44,5 cm)</span>
</div>
<div class="r" style="left:245.5px;top:503px;width:61px;height:79px;border-radius:2px 2px 0 0;overflow:hidden;background:#fafafd;box-shadow:0 0 0 0.6px #dddde6, 0 0.6px 1.4px rgba(0,0,0,.22);">
<svg style="left:0;top:0;overflow:hidden" width="61" height="62" viewBox="0 0 61 62"><rect width="61" height="62" fill="#ebe8e8"/><rect x="0" y="0" width="2.7" height="62" fill="#d9b9b0"/><rect x="2.7" y="0" width="38.3" height="62" fill="#d4643b"/><rect x="41" y="0" width="2.8" height="62" fill="#eaf4fb"/><rect x="43.8" y="0" width="15.5" height="62" fill="#d4643b"/><rect x="59.3" y="0" width="1.7" height="62" fill="#e6dcd8"/><path d="M2.7 6.7 L41 42.5 M2.7 45.8 L41 10.8 M2.7 9.2 L13.8 0 M34.7 0 L41 5.8 M2.7 44.2 L19.7 62 M41 49.2 L28.8 62 M43.8 9.2 L52.2 0 M43.8 10 L59.3 24.2 M59.3 30.8 L43.8 47.5 M43.8 48.3 L59.3 62" stroke="#2f3840" stroke-width="1.1" fill="none"/></svg>
<span class="t b" style="left:2px;top:63.6px;font-size:8.3px;color:#222;transform:scaleX(0.858)">Muratura a cassa</span>
<span class="t b" style="left:2px;top:71.9px;font-size:8.3px;color:#222;transform:scaleX(0.917)">vuota in laterizio</span>
</div>
<div class="r" style="left:315.5px;top:503px;width:61px;height:79px;border-radius:2px 2px 0 0;overflow:hidden;background:#fafafd;box-shadow:0 0 0 0.6px #dddde6, 0 0.6px 1.4px rgba(0,0,0,.22);">
<svg style="left:0;top:0;overflow:hidden" width="61" height="62" viewBox="0 0 61 62"><rect width="61" height="62" fill="#ebe8e8"/><rect x="0" y="0" width="2.7" height="62" fill="#8e8e9e"/><rect x="2.7" y="0" width="31.6" height="62" fill="#d4643b"/><rect x="34.3" y="0" width="14.5" height="62" fill="#c9e4f7"/><rect x="48.8" y="0" width="10.7" height="62" fill="#d4643b"/><rect x="59.5" y="0" width="1.5" height="62" fill="#e6dcd8"/><path d="M2.7 6.7 L34.3 37.5 M2.7 47.5 L34.3 18.3 M2.7 9.2 L13 0 M2.7 44.2 L19.7 62 M34.3 54.2 L27.2 62 M48.8 5 L53.8 0 M48.8 20 L59.5 30 M59.5 26.7 L48.8 35.8 M48.8 51.7 L59.5 62" stroke="#2f3840" stroke-width="1.1" fill="none"/><circle cx="36" cy="3.0" r="0.8" fill="#fff"/><circle cx="41" cy="7.3" r="0.8" fill="#fff"/><circle cx="46" cy="11.6" r="0.8" fill="#fff"/><circle cx="40" cy="15.9" r="0.8" fill="#fff"/><circle cx="45" cy="20.2" r="0.8" fill="#fff"/><circle cx="39" cy="24.5" r="0.8" fill="#fff"/><circle cx="44" cy="28.8" r="0.8" fill="#fff"/><circle cx="38" cy="33.1" r="0.8" fill="#fff"/><circle cx="43" cy="37.4" r="0.8" fill="#fff"/><circle cx="37" cy="41.7" r="0.8" fill="#fff"/><circle cx="42" cy="46.0" r="0.8" fill="#fff"/><circle cx="36" cy="50.3" r="0.8" fill="#fff"/><circle cx="41" cy="54.6" r="0.8" fill="#fff"/><circle cx="46" cy="58.9" r="0.8" fill="#fff"/></svg>
<span class="t b" style="left:2px;top:63.6px;font-size:8.3px;color:#222;transform:scaleX(0.858)">Muratura a cassa</span>
<span class="t b" style="left:2px;top:71.9px;font-size:8.3px;color:#222;transform:scaleX(0.917)">vuota in laterizio</span>
</div>
<div class="r" style="left:235.5px;top:582.0px;width:159.5px;height:18.0px;background:#fff;"></div>
<div class="r" style="left:395.0px;top:80.0px;width:10.0px;height:502.0px;background:#f1f0f6;"></div>
<svg style="left:397.2px;top:326.8px" width="5.4" height="8.4" viewBox="0 0 6 9"><path d="M4.8 0.6 L1 4.5 L4.8 8.4" fill="none" stroke="#8e8890" stroke-width="0.7"/></svg>
<div class="r" style="left:405.0px;top:80.0px;width:344.0px;height:22.0px;background:#f1f0f6;box-shadow:inset 1.2px 0 1.5px -0.5px rgba(0,0,0,.12);"></div>
<span class="t" style="left:430.5px;top:87.0px;font-size:8.3px;color:#2ab3ae;transform:scaleX(0.881);">Vista 3D</span>
<span class="t" style="left:491.0px;top:87.0px;font-size:8.3px;color:#2b2b2b;transform:scaleX(0.897);">Vista 2D</span>
<div class="r" style="left:413.7px;top:99.0px;width:60.8px;height:1.0px;background:#fdf5f8;"></div>
<div class="r" style="left:413.7px;top:99.9px;width:60.8px;height:2.2px;background:#2ab3ae;"></div>
<div class="r" style="left:405.0px;top:102.0px;width:344.0px;height:480.0px;background:linear-gradient(#eeeeee,#e6e6e6 25%,#d2d1d2 70%,#c5c3c4);box-shadow:inset 1px 1px 2px rgba(0,0,0,.13);"></div>
<svg style="left:0;top:0" width="1200" height="600" viewBox="0 0 1200 600"><clipPath id="jc"><polygon points="594.4,316.2 594.4,375.7 578.9,366.6 578.9,324.9"/></clipPath><g clip-path="url(#jc)"><polygon points="594.4,316.2 594.4,375.7 588.2,372.1 588.2,312.6" fill="#8a8a8a" /><polygon points="588.2,312.6 588.2,372.1 580.9,367.8 580.9,308.3" fill="#b3c3cf" /><polygon points="580.9,308.3 580.9,367.8 578.9,366.6 578.9,307.1" fill="#a84524" /></g><polygon points="518.0,329.2 649.5,253.9 643.3,250.3 511.8,325.6" fill="#7a7a7a" /><polygon points="518.0,329.2 518.0,419.5 511.8,415.9 511.8,325.6" fill="#8a8a8a" /><polygon points="511.8,325.6 643.3,250.3 636.0,246.0 504.5,321.3" fill="#a8b8c5" /><polygon points="511.8,325.6 511.8,415.9 504.5,411.6 504.5,321.3" fill="#b3c3cf" /><polygon points="504.5,321.3 636.0,246.0 634.0,244.8 502.5,320.1" fill="#9c4424" /><polygon points="504.5,321.3 504.5,411.6 502.5,410.4 502.5,320.1" fill="#a84524" /><polygon points="518.0,329.2 649.5,253.9 649.5,344.1 594.4,375.7 594.4,316.2 573.6,328.1 573.6,387.6 518.0,419.5" fill="#a2a2a2" stroke="#1c1c1c" stroke-width="0.6" stroke-linejoin="round"/><path d="M511.8 325.6 L643.3 250.3 M511.8 325.6 V415.9" stroke="#333" stroke-width="0.5" fill="none"/><path d="M518 419.5 L502.5 410.4 L502.5 320.1 L634.0 244.8 L649.5 253.9" stroke="#444" stroke-width="0.4" fill="none"/><path d="M594.4 375.7 L578.9 366.6" stroke="#333" stroke-width="0.4"/><text transform="matrix(0.93,-0.50,0.80,0.52,515.6,434.2)" font-family="Liberation Sans, sans-serif" font-weight="700" font-size="13.6" fill="#111">Interna</text></svg>
<svg style="left:0;top:0" width="1200" height="600" viewBox="0 0 1200 600" font-family="Liberation Sans, sans-serif">
<ellipse cx="701.8" cy="180.7" rx="41.6" ry="22.5" fill="#fbfbfb" stroke="#8a8aa0" stroke-width="0.5"/>
<ellipse cx="701.8" cy="180.7" rx="30.7" ry="16" fill="#efefef" stroke="#9a9aa8" stroke-width="0.5"/>
<polygon points="701.5,139.5 724.7,153 701.5,165.7 679,153" fill="#fdfdfd" stroke="#777" stroke-width="0.5"/>
<polygon points="679,153 701.5,165.7 701.5,192 679,178.5" fill="#f6f6f6" stroke="#777" stroke-width="0.5"/>
<polygon points="701.5,165.7 724.7,153 724.7,178.5 701.5,192" fill="#fafafa" stroke="#777" stroke-width="0.5"/>
<text transform="matrix(0.84,-0.5,0.84,0.5,692.3,157.6)" font-size="5.8" fill="#333">SOPRA</text>
<text transform="matrix(0.86,0.5,0,1,680.2,167.3)" font-size="5.6" fill="#222">SINISTRA</text>
<text transform="matrix(0.86,-0.5,0,1,703.6,180)" font-size="5.5" fill="#222">FRONTE</text>
<g text-anchor="middle" font-size="7" fill="#333"><text transform="translate(675.8,165.5) rotate(28) skewX(-20)" font-weight="700" fill="#d8202a">N</text>
<text transform="translate(676,191) rotate(200) skewX(-15)">W</text>
<text transform="translate(728.5,191) rotate(150) skewX(15)">S</text>
<text transform="translate(729.3,165.3) rotate(-35) skewX(20)" font-size="6">E</text></g>
</svg>
<div class="r" style="left:746.5px;top:80.0px;width:2.5px;height:502.0px;background:linear-gradient(90deg,rgba(241,240,246,0),#eceaf3);"></div>
<div class="r" style="left:749.0px;top:80.0px;width:366.0px;height:502.0px;background:#fff;"></div>
<div class="r" style="left:1115.0px;top:80.0px;width:18.0px;height:502.0px;background:#fff;"></div>
<div class="r" style="left:1115.0px;top:80.0px;width:18.0px;height:475.0px;background:#f1f0f6;"></div>
<div class="r" style="left:1115.0px;top:80.0px;width:18.0px;height:49.0px;background:#c9ede8;"></div>
<div class="r" style="left:750.0px;top:89.0px;width:361.0px;height:0.6px;background:#f0f0f5;"></div>
<div class="r" style="left:750.0px;top:102.0px;width:361.0px;height:0.6px;background:#f0f0f5;"></div>
<div class="r" style="left:750.0px;top:135.5px;width:361.0px;height:0.6px;background:#f0f0f5;"></div>
<div class="r" style="left:750.0px;top:148.5px;width:361.0px;height:0.6px;background:#f0f0f5;"></div>
<div class="r" style="left:750.0px;top:162.0px;width:361.0px;height:0.6px;background:#f0f0f5;"></div>
<div class="r" style="left:750.0px;top:175.5px;width:361.0px;height:0.6px;background:#f0f0f5;"></div>
<div class="r" style="left:750.0px;top:188.7px;width:361.0px;height:0.6px;background:#f0f0f5;"></div>
<div class="r" style="left:750.0px;top:202.0px;width:361.0px;height:0.6px;background:#f0f0f5;"></div>
<div class="r" style="left:750.0px;top:215.2px;width:361.0px;height:0.6px;background:#f0f0f5;"></div>
<div class="r" style="left:750.0px;top:228.5px;width:361.0px;height:0.6px;background:#f0f0f5;"></div>
<div class="r" style="left:749.0px;top:162.3px;width:362.0px;height:13.2px;background:#f1f0f6;"></div>
<div class="r" style="left:749.0px;top:228.8px;width:362.0px;height:7.4px;background:#f1f0f6;"></div>
<div class="r" style="left:932.5px;top:89.5px;width:0.6px;height:12.5px;background:#ececf1;"></div>
<span class="t" style="left:754.0px;top:92.1px;font-size:7px;color:#3a3434;transform:scaleX(0.987);-webkit-text-stroke:0.15px #3a3434;">Nome tipo</span>
<span class="t" style="left:754.0px;top:105.1px;font-size:7px;color:#3a3434;transform:scaleX(0.938);-webkit-text-stroke:0.15px #3a3434;">Descrizione</span>
<span class="t" style="left:754.0px;top:138.3px;font-size:7px;color:#3a3434;-webkit-text-stroke:0.15px #3a3434;">Categoria</span>
<span class="t" style="left:754.0px;top:151.5px;font-size:7px;color:#3a3434;-webkit-text-stroke:0.15px #3a3434;">Codice</span>
<span class="t" style="left:754.0px;top:178.7px;font-size:7px;color:#3a3434;transform:scaleX(0.967);-webkit-text-stroke:0.15px #3a3434;">Ripiegatura agli inserti</span>
<span class="t" style="left:754.0px;top:191.9px;font-size:7px;color:#3a3434;transform:scaleX(0.979);-webkit-text-stroke:0.15px #3a3434;">Ripiegatura all'estremità</span>
<span class="t" style="left:754.0px;top:205.1px;font-size:7px;color:#3a3434;transform:scaleX(0.990);-webkit-text-stroke:0.15px #3a3434;">Ripiegatura in cima</span>
<span class="t" style="left:754.0px;top:218.4px;font-size:7px;color:#3a3434;transform:scaleX(0.988);-webkit-text-stroke:0.15px #3a3434;">Ripiegatura alla base</span>
<span class="t" style="left:757.3px;top:164.9px;font-size:7px;color:#2a2525;font-weight:700;transform:scaleX(0.919);">Ripiegatura</span>
<svg style="left:750.5px;top:167.3px" width="4" height="3" viewBox="0 0 4 3"><path d="M0 0 H4 L2 3Z" fill="#444"/></svg>
<div class="r" style="left:749px;top:229px;width:362px;height:7.2px;overflow:hidden"><span class="t" style="left:8.3px;top:2.4px;font-size:7px;font-weight:700;color:#2a2525;transform:scaleX(0.9)">Parametri IFC</span><svg style="left:2px;top:3.6px" width="3" height="4" viewBox="0 0 3 4"><path d="M0 0 L3 2 L0 4Z" fill="#444"/></svg></div>
<div class="r" style="left:754.0px;top:115.5px;width:355.3px;height:17.0px;background:#fff;border:1px solid #efeff4;border-radius:1px;"></div>
<span class="t" style="left:758.3px;top:120.5px;font-size:7px;color:#bdbdc2;">Aggiungi testo</span>
<div class="r" style="left:933px;top:89.5px;width:178px;height:12.5px;overflow:hidden"><span class="t" style="right:1.2px;left:auto;top:2.6px;font-size:7px;color:#3a3434;transform-origin:100% 50%;transform:scaleX(1.0)">Muratura a cassa vuota con blocchi in calcestruzzo (50 cm)</span></div>
<div class="r" style="left:932.5px;top:136.0px;width:178.5px;height:12.0px;background:#f8f8fb;border:1px solid #e6e6ec;border-radius:1px;"></div>
<span class="t" style="left:934.4px;top:138.6px;font-size:7px;color:#3a3434;transform:scaleX(0.982);">Nessuna categoria</span>
<svg style="left:1104.2px;top:140.8px" width="5" height="3" viewBox="0 0 5 3"><path d="M0 0 H5 L2.5 3Z" fill="#444"/></svg>
<div class="r" style="left:932.5px;top:176.0px;width:178.5px;height:12.4px;background:#f8f8fb;border:1px solid #e6e6ec;border-radius:1px;"></div>
<span class="t" style="left:934.4px;top:178.8px;font-size:7px;color:#3a3434;transform:scaleX(0.952);">Nessuna</span>
<svg style="left:1104.2px;top:181.0px" width="5" height="3" viewBox="0 0 5 3"><path d="M0 0 H5 L2.5 3Z" fill="#444"/></svg>
<div class="r" style="left:932.5px;top:189.2px;width:178.5px;height:12.4px;background:#f8f8fb;border:1px solid #e6e6ec;border-radius:1px;"></div>
<span class="t" style="left:934.4px;top:192.0px;font-size:7px;color:#3a3434;transform:scaleX(0.952);">Nessuna</span>
<svg style="left:1104.2px;top:194.2px" width="5" height="3" viewBox="0 0 5 3"><path d="M0 0 H5 L2.5 3Z" fill="#444"/></svg>
<div class="r" style="left:932.5px;top:202.4px;width:178.5px;height:12.4px;background:#f8f8fb;border:1px solid #e6e6ec;border-radius:1px;"></div>
<span class="t" style="left:934.4px;top:205.2px;font-size:7px;color:#3a3434;transform:scaleX(0.952);">Nessuna</span>
<svg style="left:1104.2px;top:207.4px" width="5" height="3" viewBox="0 0 5 3"><path d="M0 0 H5 L2.5 3Z" fill="#444"/></svg>
<div class="r" style="left:932.5px;top:215.7px;width:178.5px;height:12.4px;background:#f8f8fb;border:1px solid #e6e6ec;border-radius:1px;"></div>
<span class="t" style="left:934.4px;top:218.5px;font-size:7px;color:#3a3434;transform:scaleX(0.952);">Nessuna</span>
<svg style="left:1104.2px;top:220.7px" width="5" height="3" viewBox="0 0 5 3"><path d="M0 0 H5 L2.5 3Z" fill="#444"/></svg>
<div class="r" style="left:1111.0px;top:89.5px;width:3.2px;height:140.5px;background:#cfcfd4;"></div>
<div class="r" style="left:749.0px;top:236.2px;width:366.0px;height:0.8px;background:#e4e3ec;"></div>
<svg style="left:1120px;top:83.5px" width="9" height="9" viewBox="0 0 9 9"><path d="M1 1.6 L3.4 0.6 H6.6 V5.6 L4.4 6.8 H1Z" fill="#333"/><path d="M1.8 7.4 V8.6 M4.6 7.4 V8.6 M7.6 2.4 V3.2 M7.6 4.4 V5.2 M7.6 6.4 V7.2" stroke="#333" stroke-width="0.7"/></svg>
<svg style="left:1120px;top:135.5px" width="9" height="9" viewBox="0 0 9 9"><path d="M1 1.6 L3.4 0.6 H6.6 V5.6 L4.4 6.8 H1Z" fill="#333"/><path d="M1.8 7.4 V8.6 M4.6 7.4 V8.6 M7.6 2.4 V3.2 M7.6 4.4 V5.2 M7.6 6.4 V7.2" stroke="#333" stroke-width="0.7"/></svg>
<span class="t" style="left:1124.3px;top:127.0px;font-size:9px;color:#222;transform-origin:0 0;transform:rotate(-90deg) scaleX(0.835) translateY(-50%);">Proprietà</span>
<span class="t" style="left:1124.3px;top:226.5px;font-size:9px;color:#333;transform-origin:0 0;transform:rotate(-90deg) scaleX(0.796) translateY(-50%);">Estrusioni e scanalature</span>
<svg style="left:752px;top:254.2px" width="10" height="10" viewBox="0 0 10 10" fill="none" stroke="#555" stroke-width="0.6"><path d="M2 1 A4.4 4.4 0 1 0 8.2 2"/><path d="M5 2.6 V7.4 M2.6 5 H7.4" stroke="#333" stroke-width="0.8"/></svg>
<svg style="left:768.2px;top:254.2px" width="10" height="10" viewBox="0 0 10 10" fill="none" stroke="#a9a9b0" stroke-width="0.6"><path d="M2 1 A4.4 4.4 0 1 0 8.2 2"/><path d="M3.4 3.4 L6.6 6.6 M6.6 3.4 L3.4 6.6"/></svg>
<svg style="left:0;top:0" width="1200" height="600"><path d="M790.3 256.3 V262.3 M788.8 257.90000000000003 L790.3 256.3 L791.8 257.90000000000003" fill="none" stroke="#a9a9b0" stroke-width="0.7"/></svg>
<span class="t" style="left:799.0px;top:255.2px;font-size:7.6px;color:#a9a9b0;transform:scaleX(0.937);">Sopra</span>
<svg style="left:0;top:0" width="1200" height="600"><path d="M833.5 256.3 V262.3 M832.0 260.7 L833.5 262.3 L835.0 260.7" fill="none" stroke="#a9a9b0" stroke-width="0.7"/></svg>
<span class="t" style="left:841.0px;top:255.2px;font-size:7.6px;color:#a9a9b0;transform:scaleX(0.930);">Sotto</span>
<svg style="left:0;top:0" width="1200" height="600"><path d="M871.3 256.1 V262.5 M869.8 257.70000000000005 L871.3 256.1 L872.8 257.70000000000005" fill="none" stroke="#333" stroke-width="0.9"/></svg>
<svg style="left:0;top:0" width="1200" height="600"><path d="M875 256.1 V262.5 M873.5 260.9 L875 262.5 L876.5 260.9" fill="none" stroke="#333" stroke-width="0.9"/></svg>
<span class="t" style="left:880.5px;top:255.2px;font-size:7.6px;color:#333;">Inverti livelli</span>
<div class="r" style="left:815.3px;top:274.7px;width:0.6px;height:188.6px;background:#ececf1;"></div>
<div class="r" style="left:966.4px;top:274.7px;width:0.6px;height:188.6px;background:#ececf1;"></div>
<div class="r" style="left:1003.3px;top:274.7px;width:0.6px;height:188.6px;background:#ececf1;"></div>
<div class="r" style="left:1067.5px;top:274.7px;width:0.6px;height:188.6px;background:#ececf1;"></div>
<span class="t" style="left:757.7px;top:282.6px;font-size:7.6px;color:#2b2626;font-weight:700;transform:scaleX(0.953);">Funzione</span>
<span class="t" style="left:825.0px;top:282.6px;font-size:7.6px;color:#2b2626;font-weight:700;">Materiale</span>
<div class="r" style="left:976.5px;top:280px;width:36.6px;height:13px;overflow:hidden"><span class="t" style="left:0;top:2.6px;font-size:7.6px;font-weight:700;color:#2b2626;transform:scaleX(0.921)">Ripiegatura</span></div>
<span class="t" style="left:1013.2px;top:282.6px;font-size:7.6px;color:#2b2626;font-weight:700;transform:scaleX(0.959);">Spessore</span>
<span class="t" style="left:1077.0px;top:282.6px;font-size:7.6px;color:#2b2626;font-weight:700;">Variabile</span>
<div class="r" style="left:749.0px;top:297.3px;width:366.0px;height:11.4px;background:#d9d9e6;"></div>
<span class="t" style="left:916.5px;top:299.3px;font-size:7.6px;color:#3a3a44;transform:scaleX(0.850);">ESTERNA</span>
<div class="r" style="left:749.0px;top:330.7px;width:366.0px;height:11.3px;background:#d9d9e6;"></div>
<span class="t" style="left:917.0px;top:332.7px;font-size:7.6px;color:#3a3a44;transform:scaleX(0.947);">NUCLEO</span>
<div class="r" style="left:749.0px;top:364.0px;width:366.0px;height:11.3px;background:#d9d9e6;"></div>
<span class="t" style="left:917.0px;top:365.9px;font-size:7.6px;color:#3a3a44;transform:scaleX(0.947);">NUCLEO</span>
<div class="r" style="left:749.0px;top:420.0px;width:366.0px;height:11.3px;background:#d9d9e6;"></div>
<span class="t" style="left:917.0px;top:421.9px;font-size:7.6px;color:#3a3a44;transform:scaleX(0.899);">INTERNA</span>
<span class="t" style="left:759.5px;top:316.2px;font-size:7px;color:#3a3434;transform:scaleX(0.912);">[4] Finitura 1</span>
<svg style="left:807.5px;top:318.6px" width="5" height="3" viewBox="0 0 5 3"><path d="M0 0 H5 L2.5 3Z" fill="#444"/></svg>
<span class="t" style="left:827.5px;top:316.2px;font-size:7px;color:#3a3434;transform:scaleX(0.967);">Blocchi in calcestruzzo</span>
<svg style="left:949.8px;top:318.6px" width="5" height="3" viewBox="0 0 5 3"><path d="M0 0 H5 L2.5 3Z" fill="#444"/></svg>
<div class="r" style="left:978.3px;top:313.2px;width:13.0px;height:13.0px;background:#fff;border:1px solid #e3e3ea;border-radius:2.5px;"></div>
<div class="r" style="left:1009.5px;top:313.5px;width:40.0px;height:12.4px;background:#fff;border:1px solid #ececf1;"></div>
<span class="t" style="left:1027.6px;top:316.3px;font-size:7px;color:#3a3434;transform:scaleX(0.930);">100.00</span>
<span class="t" style="left:1051.5px;top:317.3px;font-size:6.6px;color:#2a2525;font-weight:700;transform:scaleX(0.809);">mm</span>
<div class="r" style="left:1085.3px;top:313.2px;width:13.0px;height:13.0px;background:#fff;border:1px solid #e3e3ea;border-radius:2.5px;"></div>
<span class="t" style="left:759.5px;top:349.5px;font-size:7px;color:#3a3434;transform:scaleX(0.967);">[3] Strato ter...</span>
<svg style="left:807.5px;top:351.9px" width="5" height="3" viewBox="0 0 5 3"><path d="M0 0 H5 L2.5 3Z" fill="#444"/></svg>
<span class="t" style="left:827.5px;top:349.5px;font-size:7px;color:#3a3434;transform:scaleX(0.977);">Aria non ventilata 300 mm (flusso orizz...</span>
<svg style="left:949.8px;top:351.9px" width="5" height="3" viewBox="0 0 5 3"><path d="M0 0 H5 L2.5 3Z" fill="#444"/></svg>
<div class="r" style="left:1009.5px;top:346.8px;width:40.0px;height:12.4px;background:#fff;border:1px solid #ececf1;"></div>
<span class="t" style="left:1027.6px;top:349.6px;font-size:7px;color:#3a3434;transform:scaleX(0.930);">300.00</span>
<span class="t" style="left:1051.5px;top:350.6px;font-size:6.6px;color:#2a2525;font-weight:700;transform:scaleX(0.809);">mm</span>
<div class="r" style="left:1085.3px;top:346.5px;width:13.0px;height:13.0px;background:#fff;border:1px solid #e3e3ea;border-radius:2.5px;"></div>
<span class="t" style="left:759.5px;top:382.7px;font-size:7px;color:#3a3434;transform:scaleX(0.957);">[1] Struttura</span>
<svg style="left:807.5px;top:385.1px" width="5" height="3" viewBox="0 0 5 3"><path d="M0 0 H5 L2.5 3Z" fill="#444"/></svg>
<span class="t" style="left:827.5px;top:382.7px;font-size:7px;color:#3a3434;">Mattone forato cm 8</span>
<svg style="left:949.8px;top:385.1px" width="5" height="3" viewBox="0 0 5 3"><path d="M0 0 H5 L2.5 3Z" fill="#444"/></svg>
<div class="r" style="left:978.3px;top:379.7px;width:13.0px;height:13.0px;background:#fff;border:1px solid #e3e3ea;border-radius:2.5px;"></div>
<div class="r" style="left:1009.5px;top:380.0px;width:40.0px;height:12.4px;background:#fff;border:1px solid #ececf1;"></div>
<span class="t" style="left:1031.2px;top:382.8px;font-size:7px;color:#3a3434;transform:scaleX(0.930);">80.00</span>
<span class="t" style="left:1051.5px;top:383.8px;font-size:6.6px;color:#2a2525;font-weight:700;transform:scaleX(0.809);">mm</span>
<div class="r" style="left:1085.3px;top:379.7px;width:13.0px;height:13.0px;background:#fff;border:1px solid #e3e3ea;border-radius:2.5px;"></div>
<span class="t" style="left:759.5px;top:404.8px;font-size:7px;color:#3a3434;transform:scaleX(0.964);">[5] Finitura 2</span>
<svg style="left:807.5px;top:407.2px" width="5" height="3" viewBox="0 0 5 3"><path d="M0 0 H5 L2.5 3Z" fill="#444"/></svg>
<span class="t" style="left:827.5px;top:404.8px;font-size:7px;color:#3a3434;transform:scaleX(0.986);">Intonaco di calce e gesso (interno)</span>
<svg style="left:949.8px;top:407.2px" width="5" height="3" viewBox="0 0 5 3"><path d="M0 0 H5 L2.5 3Z" fill="#444"/></svg>
<div class="r" style="left:978.3px;top:401.8px;width:13.0px;height:13.0px;background:#fff;border:1px solid #e3e3ea;border-radius:2.5px;"></div>
<div class="r" style="left:1009.5px;top:402.1px;width:40.0px;height:12.4px;background:#fff;border:1px solid #ececf1;"></div>
<span class="t" style="left:1031.2px;top:404.9px;font-size:7px;color:#3a3434;transform:scaleX(0.930);">20.00</span>
<span class="t" style="left:1051.5px;top:405.9px;font-size:6.6px;color:#2a2525;font-weight:700;transform:scaleX(0.809);">mm</span>
<div class="r" style="left:1085.3px;top:401.8px;width:13.0px;height:13.0px;background:#fff;border:1px solid #e3e3ea;border-radius:2.5px;"></div>
<span class="t" style="left:1013.0px;top:437.8px;font-size:7.6px;color:#2b2626;font-weight:700;transform:scaleX(0.954);">Spessore totale</span>
<div class="r" style="left:1009.5px;top:447.2px;width:40.0px;height:12.4px;background:#fff;border:1px solid #ececf1;"></div>
<span class="t" style="left:1027.6px;top:450.0px;font-size:7px;color:#3a3434;transform:scaleX(0.930);">500.00</span>
<span class="t" style="left:1051.5px;top:451.0px;font-size:6.6px;color:#2a2525;font-weight:700;transform:scaleX(0.809);">mm</span>
<div class="r" style="left:67.0px;top:582.0px;width:1066.0px;height:18.0px;background:#77777f;"></div>
<div class="r" style="left:282.0px;top:582.0px;width:124.0px;height:18.0px;background:#93e9e9;"></div>
<span class="t" style="left:70.8px;top:587.5px;font-size:7.6px;color:#dcdce2;transform:scaleX(1.116);">X: -</span>
<span class="t" style="left:113.7px;top:587.5px;font-size:7.6px;color:#dcdce2;transform:scaleX(1.166);">Y: -</span>
<span class="t" style="left:156.9px;top:587.5px;font-size:7.6px;color:#dcdce2;transform:scaleX(1.035);">Z: -</span>
<span class="t" style="left:218.7px;top:587.0px;font-size:8.3px;color:#dcdce2;transform:scaleX(0.955);">mm</span>
<svg style="left:234px;top:589.3px" width="6" height="4" viewBox="0 0 6 4"><path d="M0 0 H6 L3 4Z" fill="#fff"/></svg>
<svg style="left:244.5px;top:585.5px" width="11" height="11" viewBox="0 0 11 11"><path d="M5.5 0.4 L10.6 5.5 L5.5 10.6 L0.4 5.5Z" fill="#8fe9e9" stroke="#e8ffff" stroke-width="0.6"/><path d="M5.5 2.6 L8.4 5.5 L5.5 8.4 L2.6 5.5Z" fill="#4cc6c6"/></svg>
<svg style="left:261px;top:586px" width="10" height="10" viewBox="0 0 10 10"><path d="M0.8 2.4 L2.6 1 H8.4 Q9.4 1 9.4 2 V8.6 L7.8 9.4 H0.8Z" fill="#c9c9cf"/><path d="M0.8 2.4 H7.8 V9.4 M7.8 2.4 L9.2 1.2" stroke="#e6e6ea" stroke-width="0.5" fill="none"/></svg>
<svg style="left:285.5px;top:585.5px" width="11" height="11" viewBox="0 0 11 11" fill="none" stroke="#4d8a8e" stroke-width="0.7"><path d="M1 4 H6 M6 4 V10" /><circle cx="6.4" cy="3.8" r="1.5"/></svg>
<svg style="left:302.5px;top:585.5px" width="11" height="11" viewBox="0 0 11 11" fill="none" stroke="#4d8a8e" stroke-width="0.7"><path d="M3 0.5 L6.5 8.5 M0.6 8.6 H10.6"/><circle cx="2.6" cy="8.6" r="1.2"/><circle cx="7.6" cy="8.6" r="1.2"/></svg>
<svg style="left:320.5px;top:585.5px" width="11" height="11" viewBox="0 0 11 11" fill="none" stroke="#4d8a8e" stroke-width="0.7"><path d="M0.5 6 H8.6"/><circle cx="5" cy="6" r="1.4"/><path d="M8 2 L10 4.4 M10 2 L8 4.4" stroke-width="0.5"/></svg>
<svg style="left:337.5px;top:585.5px" width="11" height="11" viewBox="0 0 11 11" fill="none" stroke="#4d8a8e" stroke-width="0.7"><path d="M1.4 2 L9.6 9 M9.6 2 L1.4 9 M5.5 0.6 V10.4"/><circle cx="5.5" cy="1.6" r="1.1"/><circle cx="2" cy="8.6" r="1.1"/><circle cx="9" cy="8.6" r="1.1"/></svg>
<svg style="left:355.5px;top:585.5px" width="11" height="11" viewBox="0 0 11 11" fill="none" stroke="#4d8a8e" stroke-width="0.7"><path d="M0.8 1.6 L4.2 3.4 M4.6 4.4 L8.4 8.4"/><circle cx="4.2" cy="3.6" r="1.3"/><circle cx="8.8" cy="8.8" r="1.1"/></svg>
<svg style="left:373.5px;top:585.5px" width="11" height="11" viewBox="0 0 11 11" fill="none" stroke="#4d8a8e" stroke-width="0.7"><path d="M0.6 3.6 H10.4 M2 7.6 H10.4"/><circle cx="4.6" cy="3.6" r="1.3"/><circle cx="8" cy="7.6" r="1.1"/></svg>
<svg style="left:391.5px;top:585.5px" width="11" height="11" viewBox="0 0 11 11" fill="none" stroke="#4d8a8e" stroke-width="0.7"><path d="M5 0.6 V7 M0.8 8.4 H10.2"/><circle cx="5" cy="3" r="1.4"/><circle cx="6.8" cy="8.4" r="1.1"/></svg>
<svg style="left:409.5px;top:585.5px" width="11" height="11" viewBox="0 0 11 11" fill="none" stroke="#dcdce2" stroke-width="0.7"><path d="M2.6 0.4 V10.6 M5.5 0.4 V10.6 M8.4 0.4 V10.6 M0.4 2.6 H10.6 M0.4 5.5 H10.6 M0.4 8.4 H10.6"/><circle cx="5.5" cy="5.5" r="1.6" fill="#dcdce2"/></svg>
<svg style="left:427px;top:585.5px" width="11" height="11" viewBox="0 0 11 11" fill="none" stroke="#dcdce2" stroke-width="0.7"><path d="M1.4 0.6 V9.8 H10.6 M1.4 9.8 L9.6 1.4"/><circle cx="5.6" cy="5.6" r="1.3" fill="#dcdce2"/></svg>
<svg style="left:445px;top:585.3px" width="11.5" height="11.5" viewBox="0 0 11 11" fill="none" stroke="#dcdce2" stroke-width="0.7"><path d="M5.5 0.6 L10 3 V8 L5.5 10.4 L1 8 V3Z M5.5 5.6 V10.4 M5.5 5.6 L1 3 M5.5 5.6 L10 3"/><circle cx="5.5" cy="5.6" r="1.2" fill="#dcdce2"/></svg>
<span class="t" style="left:465.0px;top:587.5px;font-size:7.6px;color:#a9a9b2;transform:scaleX(0.866);">Angoli</span>
<div class="r" style="left:492.7px;top:586.0px;width:36.6px;height:10.7px;background:#c9c9ce;border-radius:1px;"></div>
<span class="t" style="left:515.0px;top:587.6px;font-size:7.6px;color:#a2a2ab;transform:scaleX(0.811);">22.5</span>
<div class="r" style="left:67.0px;top:79.4px;width:1066.0px;height:8.1px;background:linear-gradient(#b9dc8f,#d3e9b8 14%,rgba(226,241,208,.75) 30%,rgba(240,248,230,.35) 60%,rgba(255,255,255,0));z-index:5;"></div>
</div></body></html>
